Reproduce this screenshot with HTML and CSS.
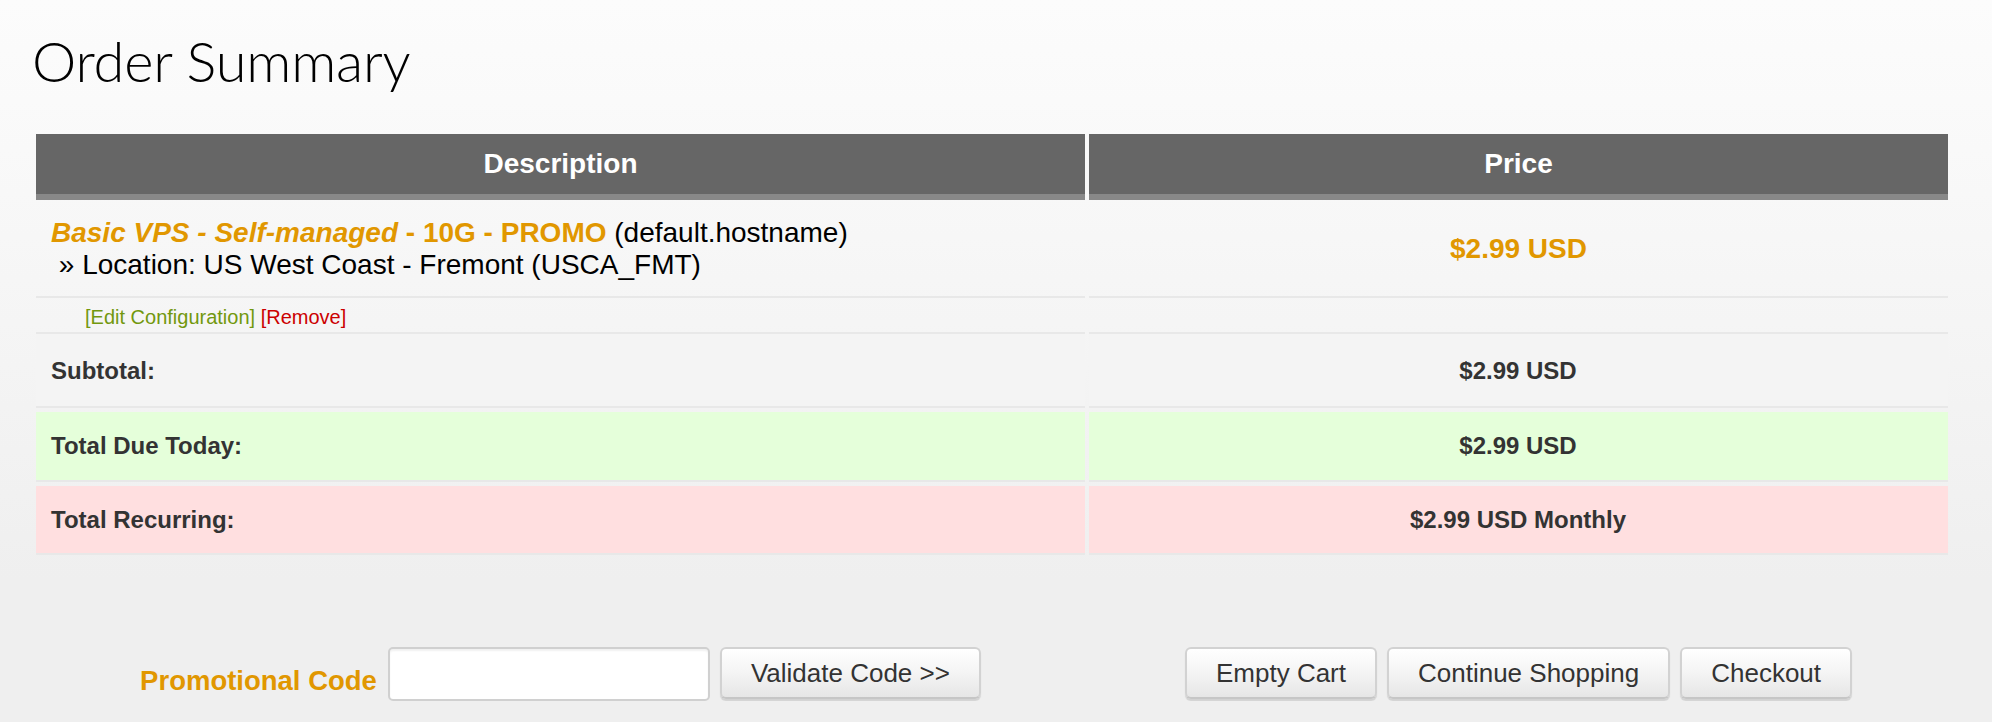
FILE: index.html
```html
<!DOCTYPE html>
<html lang="en">
<head>
<meta charset="utf-8">
<title>Order Summary</title>
<link rel="stylesheet" href="styles.css">
</head>
<body>
<div class="page">
  <h1 class="title">Order Summary</h1>
  <table class="cart">
    <colgroup>
      <col class="c-desc">
      <col class="c-price">
    </colgroup>
    <thead>
      <tr><th>Description</th><th>Price</th></tr>
    </thead>
    <tbody>
      <tr class="item">
        <td class="desc"><strong class="pname"><em>Basic VPS - Self-managed</em> - 10G - PROMO</strong> (default.hostname)<br>&nbsp;&raquo; Location: US West Coast - Fremont (USCA_FMT)</td>
        <td class="price">$2.99 USD</td>
      </tr>
      <tr class="item-actions">
        <td><a class="edit" href="#">[Edit Configuration]</a> <a class="remove" href="#">[Remove]</a></td>
        <td></td>
      </tr>
      <tr class="sum subtotal">
        <td>Subtotal:</td>
        <td class="amt">$2.99 USD</td>
      </tr>
      <tr class="sum due">
        <td>Total Due Today:</td>
        <td class="amt">$2.99 USD</td>
      </tr>
      <tr class="sum recurring">
        <td>Total Recurring:</td>
        <td class="amt">$2.99 USD Monthly</td>
      </tr>
    </tbody>
  </table>
  <div class="bottom">
    <form class="promo">
      <label class="promo-label" for="promocode">Promotional Code</label>
      <input class="promo-input" id="promocode" type="text">
      <button class="btn" type="button">Validate Code &gt;&gt;</button>
    </form>
    <div class="cart-buttons">
      <button class="btn" type="button">Empty Cart</button>
      <button class="btn" type="button">Continue Shopping</button>
      <button class="btn" type="button">Checkout</button>
    </div>
  </div>
</div>
</body>
</html>
```
FILE: styles.css
```css
html {
  background: #efefef linear-gradient(to bottom, #fcfcfc 0px, #f9f9f9 150px, #efefef 580px) no-repeat;
  min-height: 100%;
}
body {
  margin: 0;
  font-family: "Liberation Sans", Arial, sans-serif;
  color: #000;
}
.page {
  padding: 27px 40px 0 32px;
}
.title {
  margin: 0 0 39px;
  font-family: Lato, "Open Sans", sans-serif;
  font-weight: 300;
  font-size: 56px;
  line-height: 68px;
  letter-spacing: -0.2px;
  color: #000;
}
.cart {
  width: 1920px;
  table-layout: fixed;
  border-collapse: separate;
  border-spacing: 4px 0;
}
.c-desc { width: 1049px; }
.c-price { width: 859px; }
.cart th {
  background: #666;
  color: #fff;
  font-weight: bold;
  font-size: 28px;
  line-height: 30px;
  padding: 15px 0;
  border-bottom: 6px solid #888;
  text-align: center;
}
.item td {
  padding: 17px 15px 15px;
  font-size: 28px;
  line-height: 32px;
  border-bottom: 2px solid #e8e8e8;
  vertical-align: top;
}
.item .price {
  text-align: center;
  vertical-align: middle;
  color: #e19700;
  font-weight: bold;
}
.pname {
  color: #e19700;
  font-weight: bold;
}
.item-actions td {
  padding: 8px 0 3px 49px;
  font-size: 20px;
  line-height: 23px;
  border-bottom: 2px solid #e8e8e8;
}
.edit {
  color: #72980e;
  text-decoration: none;
}
.remove {
  color: #cc0000;
  text-decoration: none;
}
.sum td {
  font-size: 24px;
  font-weight: bold;
  color: #333;
  line-height: 28px;
  padding: 20px 16px 20px 15px;
  border-bottom: 2px solid #e8e8e8;
  background-clip: padding-box;
}
.sum .amt {
  text-align: center;
}
.subtotal td {
  background-color: #f4f4f4;
  padding-top: 23px;
  padding-bottom: 21px;
}
.due td {
  background-color: #e5ffda;
  border-top: 4px solid transparent;
}
.recurring td {
  background-color: #ffdfe0;
  border-top: 4px solid transparent;
  padding-bottom: 19px;
}
.bottom {
  display: grid;
  grid-template-columns: 1049px 859px;
  column-gap: 4px;
  padding: 0 4px;
  margin-top: 92px;
}
.promo {
  display: flex;
  justify-content: center;
  align-items: flex-end;
  margin: 0;
}
.promo-label {
  color: #e19700;
  font-weight: bold;
  font-size: 27.5px;
  line-height: 30px;
  padding-bottom: 5px;
  margin-right: 11px;
}
.promo-input {
  width: 322px;
  height: 54px;
  box-sizing: border-box;
  border: 2px solid #d0d0d0;
  border-radius: 5px;
  background: #fff;
  box-shadow: inset 0 2px 2px rgba(0, 0, 0, 0.06);
  margin: 0 10px 0 0;
  padding: 0 8px;
  font-size: 24px;
}
.cart-buttons {
  display: flex;
  justify-content: center;
  align-items: flex-start;
  gap: 10px;
}
.btn {
  height: 52px;
  box-sizing: border-box;
  padding: 0 29px;
  border: 2px solid #d2d2d2;
  border-bottom-color: #c6c6c6;
  border-radius: 6px;
  background: linear-gradient(to bottom, #ffffff 0%, #f4f4f4 50%, #e6e6e6 100%);
  font-family: "Liberation Sans", Arial, sans-serif;
  font-size: 26px;
  color: #333;
  box-shadow: 0 2px 1px rgba(0, 0, 0, 0.12);
  margin-bottom: 2px;
  cursor: pointer;
}
```
